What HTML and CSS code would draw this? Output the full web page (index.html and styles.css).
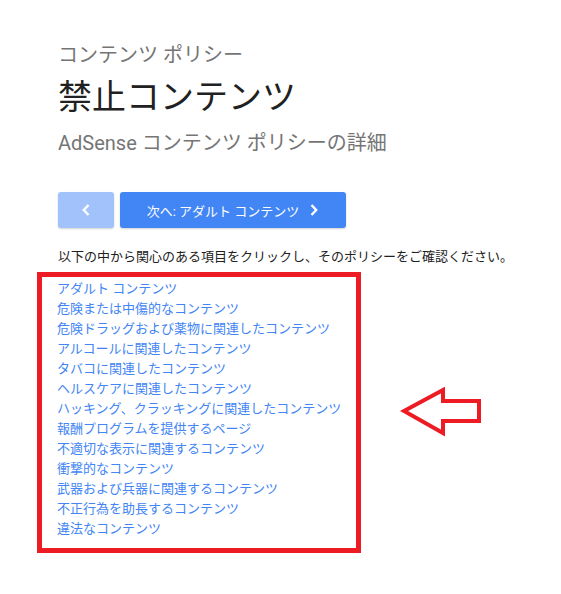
FILE: index.html
```html
<!DOCTYPE html>
<html lang="ja">
<head>
<meta charset="utf-8">
<link rel="stylesheet" href="styles.css">
</head>
<body>
<div class="page">
  <div class="eyebrow">コンテンツ ポリシー</div>
  <h1 class="title">禁止コンテンツ</h1>
  <div class="subtitle">AdSense コンテンツ ポリシーの詳細</div>
  <div class="nav">
    <a class="btn btn-prev" href="#"><svg width="10" height="14" viewBox="0 0 10 14"><path d="M7.5 2 L2.8 7 L7.5 12" fill="none" stroke="#fff" stroke-width="2.4"/></svg></a>
    <a class="btn btn-next" href="#"><span>次へ: アダルト コンテンツ</span><svg width="10" height="14" viewBox="0 0 10 14"><path d="M2.5 2 L7.2 7 L2.5 12" fill="none" stroke="#fff" stroke-width="2.4"/></svg></a>
  </div>
  <p class="desc">以下の中から関心のある項目をクリックし、そのポリシーをご確認ください。</p>
  <div class="row">
    <ul class="links">
      <li><a href="#">アダルト コンテンツ</a></li>
      <li><a href="#">危険または中傷的なコンテンツ</a></li>
      <li><a href="#">危険ドラッグおよび薬物に関連したコンテンツ</a></li>
      <li><a href="#">アルコールに関連したコンテンツ</a></li>
      <li><a href="#">タバコに関連したコンテンツ</a></li>
      <li><a href="#">ヘルスケアに関連したコンテンツ</a></li>
      <li><a href="#">ハッキング、クラッキングに関連したコンテンツ</a></li>
      <li><a href="#">報酬プログラムを提供するページ</a></li>
      <li><a href="#">不適切な表示に関連するコンテンツ</a></li>
      <li><a href="#">衝撃的なコンテンツ</a></li>
      <li><a href="#">武器および兵器に関連するコンテンツ</a></li>
      <li><a href="#">不正行為を助長するコンテンツ</a></li>
      <li><a href="#">違法なコンテンツ</a></li>
    </ul>
    <svg class="arrow" width="86" height="56" viewBox="0 0 86 56"><polygon points="4,24 43,3 43,14 79,14 79,34 43,34 43,46" fill="none" stroke="#ed1c24" stroke-width="4" stroke-linejoin="miter"/></svg>
  </div>
</div>
</body>
</html>
```
FILE: styles.css
```css
html, body {
  margin: 0;
  padding: 0;
  background: #ffffff;
}
body {
  font-family: "Roboto", "Noto Sans CJK JP", sans-serif;
  color: #212121;
}
.page {
  padding: 43px 0 0 58px;
}
.eyebrow {
  font-size: 20px;
  line-height: 24px;
  color: #757575;
}
.title {
  margin: 10px 0 0;
  font-size: 34px;
  line-height: 40px;
  font-weight: 400;
  color: #212121;
}
.subtitle {
  margin-top: 14px;
  font-size: 20px;
  line-height: 24px;
  color: #757575;
}
.nav {
  margin-top: 37px;
  display: flex;
  gap: 6px;
}
.btn {
  display: flex;
  align-items: center;
  justify-content: center;
  height: 36px;
  border-radius: 3px;
  text-decoration: none;
  color: #fff;
  font-size: 13px;
  box-shadow: 0 1px 2px rgba(0,0,0,0.18);
}
.btn-prev {
  width: 56px;
  background: #a1c2fa;
}
.btn-next {
  width: 226px;
  background: #4285f4;
  gap: 10px;
}
.desc {
  margin: 19px 0 0;
  font-size: 13px;
  line-height: 20px;
  color: #212121;
}
.row {
  display: flex;
  align-items: center;
  margin-top: 5px;
  margin-left: -21px;
}
.links {
  list-style: none;
  margin: 0;
  padding: 2px 0 9px 15px;
  width: 299px;
  border: 5px solid #ed1c24;
}
.links li {
  font-size: 13px;
  line-height: 20px;
}
.links a {
  color: #4285f4;
  text-decoration: none;
}
.arrow {
  margin-left: 39px;
  margin-top: 4px;
}
```
